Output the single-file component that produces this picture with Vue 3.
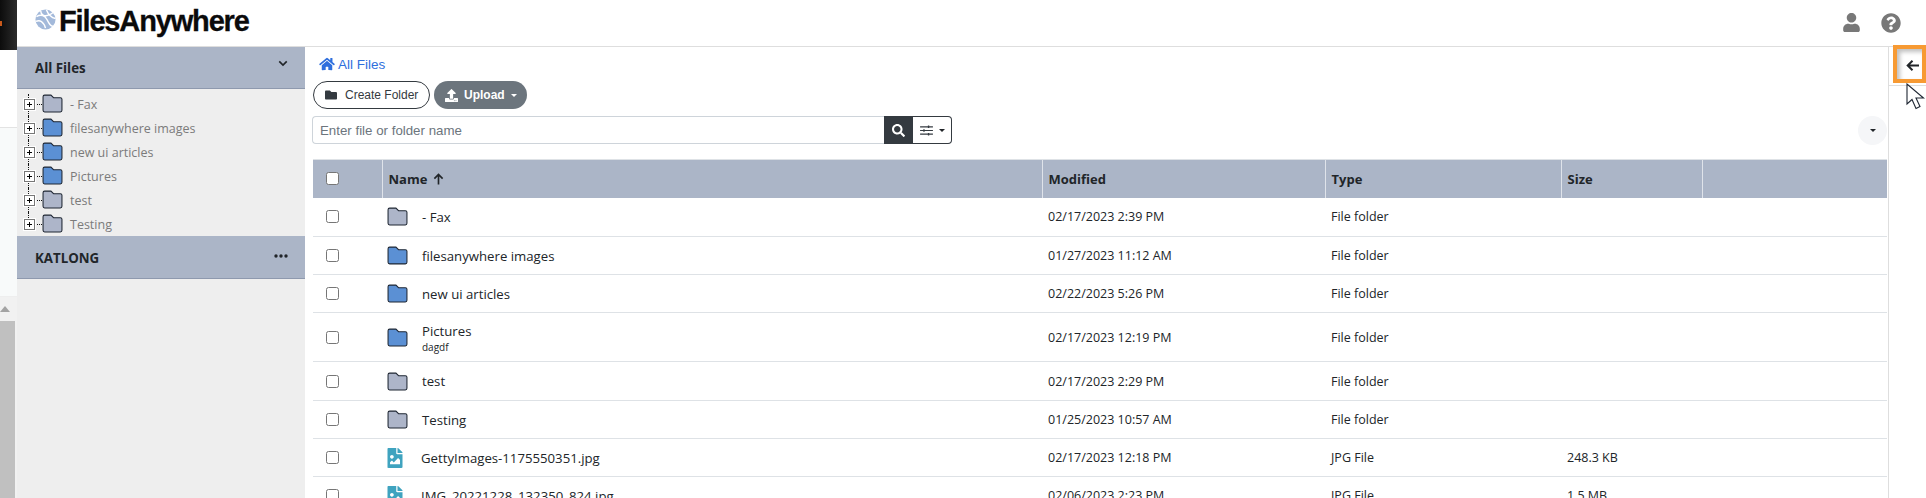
<template>
  <div class="page">
    <!-- slice of the window behind the file manager -->
    <div class="strip">
      <div class="strip-top"><span class="strip-mark"></span></div>
      <div class="strip-mid"></div>
      <div class="strip-low"></div>
      <div class="strip-arrow"><span></span></div>
      <div class="strip-thumb"></div>
    </div>

    <div class="shell">
      <header class="topbar">
        <div class="logo">
          <svg class="logo-globe" viewBox="0 0 22 22" aria-hidden="true">
            <circle cx="11" cy="11" r="10.500" fill="#a3b9da" />
            <path d="M1.500 8c5-3 9-1 11 3s4 8 7 7M1 13c4-2 8 0 10 7M6 2c0 4 4 6 8 4.500s5-3 5-3M12 1c2 5 5 8 9.500 9" fill="none" stroke="#fff" stroke-width="1.500" />
          </svg>
          <span class="logo-text">FilesAnywhere</span>
        </div>
        <div class="top-icons">
          <svg class="icon-user" viewBox="0 0 448 512" aria-hidden="true"><path :d="icons.user" /></svg>
          <svg class="icon-help" viewBox="0 0 512 512" aria-hidden="true"><path :d="icons.help" /></svg>
        </div>
      </header>

      <div class="body">
        <aside class="side">
          <div class="side-head">
            <span>All Files</span>
            <svg class="chev" viewBox="0 0 12 8" aria-hidden="true"><path d="M1.500 1.500 6 6l4.500-4.500" fill="none" stroke="#212529" stroke-width="2" /></svg>
          </div>
          <ul class="tree">
            <li v-for="(item, i) in tree" :key="item.name" class="tree-row">
              <span class="tree-v" :class="{ first: i === 0, last: i === tree.length - 1 }"></span>
              <span class="tree-box"></span>
              <span class="tree-h"></span>
              <svg class="tree-folder" viewBox="0 0 20 18" aria-hidden="true">
                <path d="M1 2.500a1.500 1.500 0 0 1 1.500-1.500h6l2.500 2.500H17.500a1.500 1.500 0 0 1 1.500 1.500V15.500A1.500 1.500 0 0 1 17.500 17H2.500A1.500 1.500 0 0 1 1 15.500z" :fill="item.blue ? '#5b90d4' : '#adb5c9'" stroke="#1f2733" stroke-width="1" />
              </svg>
              <span class="tree-name">{{ item.name }}</span>
            </li>
          </ul>
          <div class="side-head side-head-second">
            <span>KATLONG</span>
            <svg class="dots" viewBox="0 0 14 4" aria-hidden="true">
              <circle cx="2" cy="2" r="1.700" /><circle cx="7" cy="2" r="1.700" /><circle cx="12" cy="2" r="1.700" />
            </svg>
          </div>
        </aside>

        <main class="main">
          <div class="crumb">
            <svg class="icon-home" viewBox="0 0 576 512" aria-hidden="true"><path :d="icons.home" /></svg>
            <span>All Files</span>
          </div>

          <div class="actions">
            <button class="btn-create">
              <svg viewBox="0 0 512 512" aria-hidden="true"><path :d="icons.folder" /></svg>
              Create Folder
            </button>
            <button class="btn-upload">
              <svg viewBox="0 0 512 512" aria-hidden="true"><path :d="icons.upload" /></svg>
              Upload
              <span class="caret caret-light"></span>
            </button>
          </div>

          <div class="search-row">
            <div class="search">
              <input class="search-input" type="text" placeholder="Enter file or folder name" />
              <button class="search-go">
                <svg viewBox="0 0 512 512" aria-hidden="true"><path :d="icons.search" /></svg>
              </button>
              <button class="search-filter">
                <svg viewBox="0 0 14 12" aria-hidden="true">
                  <path d="M0 2h14M0 6h14M0 10h14" stroke="#343a40" stroke-width="1.200" fill="none" />
                  <path d="M8.500 .6h1.500v2.800H8.500zM3.500 4.600h1.500v2.800H3.500zM8.500 8.600h1.500v2.800H8.500z" fill="#343a40" />
                </svg>
                <span class="caret"></span>
              </button>
            </div>
            <span class="more"><span class="caret"></span></span>
          </div>

          <table class="files">
            <colgroup>
              <col class="c-check" /><col class="c-name" /><col class="c-mod" /><col class="c-type" /><col class="c-size" /><col />
            </colgroup>
            <thead>
              <tr>
                <th><span class="check"></span></th>
                <th>
                  Name
                  <svg class="sort" viewBox="0 0 12 13" aria-hidden="true"><path d="M6 12.500V1.500M1.500 6 6 1.500 10.500 6" fill="none" stroke="#212529" stroke-width="1.800" /></svg>
                </th>
                <th>Modified</th>
                <th>Type</th>
                <th>Size</th>
                <th></th>
              </tr>
            </thead>
            <tbody>
              <tr v-for="row in rows" :key="row.name" :style="{ height: row.h + 'px' }">
                <td><span class="check"></span></td>
                <td>
                  <div class="name-cell">
                    <svg v-if="row.kind !== 'image'" class="row-folder" viewBox="0 0 20 18" aria-hidden="true">
                      <path d="M1 2.500a1.500 1.500 0 0 1 1.500-1.500h6l2.500 2.500H17.500a1.500 1.500 0 0 1 1.500 1.500V15.500A1.500 1.500 0 0 1 17.500 17H2.500A1.500 1.500 0 0 1 1 15.500z" :fill="row.kind === 'blue' ? '#5b90d4' : '#adb5c9'" stroke="#1f2733" stroke-width="1" />
                    </svg>
                    <svg v-else class="row-image" viewBox="0 0 384 512" aria-hidden="true"><path :d="icons.image" /></svg>
                    <div class="name-text">
                      <div>{{ row.name }}</div>
                      <div v-if="row.note" class="note">{{ row.note }}</div>
                    </div>
                  </div>
                </td>
                <td>{{ row.modified }}</td>
                <td>{{ row.type }}</td>
                <td>{{ row.size }}</td>
                <td></td>
              </tr>
            </tbody>
          </table>
        </main>

        <div class="rail">
          <div class="rail-top">
            <div class="rail-mark">
              <svg viewBox="0 0 14 12" aria-hidden="true"><path d="M13 6H2M6.500 1.200 1.700 6l4.800 4.800" fill="none" stroke="#212529" stroke-width="2" /></svg>
            </div>
            <svg class="pointer" viewBox="0 0 20 28" aria-hidden="true">
              <path d="M1 1v20l5-4.500 4 9 4-2-4-8.500h7.500z" fill="#fff" stroke="#1f2733" stroke-width="1.100" />
            </svg>
          </div>
        </div>
      </div>
    </div>
  </div>
</template>

<script setup>
const icons = {
  user: 'M224 256c70.700 0 128-57.300 128-128S294.700 0 224 0 96 57.300 96 128s57.300 128 128 128zm89.600 32h-16.700c-22.200 10.200-46.900 16-72.900 16s-50.600-5.800-72.900-16h-16.700C60.200 288 0 348.200 0 422.400V464c0 26.500 21.500 48 48 48h352c26.500 0 48-21.500 48-48v-41.600c0-74.200-60.200-134.400-134.400-134.400z',
  help: 'M504 256c0 136.997-111.043 248-248 248S8 392.997 8 256C8 119.083 119.043 8 256 8s248 111.083 248 248zM262.655 90c-54.497 0-89.255 22.957-116.549 63.758-3.536 5.286-2.353 12.415 2.715 16.258l34.699 26.310c5.205 3.947 12.621 3.008 16.665-2.122 17.864-22.658 30.113-35.797 57.303-35.797 20.429 0 45.698 13.148 45.698 32.958 0 14.976-12.363 22.667-32.534 33.976C247.128 238.528 216 254.941 216 296v4c0 6.627 5.373 12 12 12h56c6.627 0 12-5.373 12-12v-1.333c0-28.462 83.186-29.647 83.186-106.667 0-58.002-60.165-102-116.531-102zM256 338c-25.365 0-46 20.635-46 46 0 25.364 20.635 46 46 46s46-20.636 46-46c0-25.365-20.635-46-46-46z',
  home: 'M280.370 148.260L96 300.110V464a16 16 0 0 0 16 16l112.060-.29a16 16 0 0 0 15.920-16V368a16 16 0 0 1 16-16h64a16 16 0 0 1 16 16v95.640a16 16 0 0 0 16 16.050L464 480a16 16 0 0 0 16-16V300L295.670 148.260a12.190 12.190 0 0 0-15.300 0zM571.600 251.470L488 182.560V44.050a12 12 0 0 0-12-12h-56a12 12 0 0 0-12 12v72.610L318.470 43a48 48 0 0 0-61 0L4.340 251.470a12 12 0 0 0-1.600 16.900l25.500 31A12 12 0 0 0 45.150 301l235.220-193.740a12.190 12.190 0 0 1 15.300 0L530.900 301a12 12 0 0 0 16.900-1.600l25.500-31a12 12 0 0 0-1.700-16.930z',
  folder: 'M464 128H272l-64-64H48C21.490 64 0 85.490 0 112v288c0 26.510 21.490 48 48 48h416c26.510 0 48-21.490 48-48V176c0-26.510-21.490-48-48-48z',
  upload: 'M296 384h-80c-13.300 0-24-10.700-24-24V192h-87.700c-17.800 0-26.700-21.500-14.100-34.100L242.300 5.700c7.500-7.500 19.800-7.500 27.300 0l152.200 152.200c12.600 12.600 3.700 34.100-14.100 34.100H320v168c0 13.300-10.700 24-24 24zm216-8v112c0 13.300-10.700 24-24 24H24c-13.300 0-24-10.700-24-24V376c0-13.300 10.700-24 24-24h136v8c0 30.900 25.100 56 56 56h80c30.900 0 56-25.100 56-56v-8h136c13.300 0 24 10.700 24 24zm-124 88c0-11-9-20-20-20s-20 9-20 20 9 20 20 20 20-9 20-20zm64 0c0-11-9-20-20-20s-20 9-20 20 9 20 20 20 20-9 20-20z',
  search: 'M505 442.700L405.300 343c-4.500-4.500-10.600-7-17-7H372c27.600-35.300 44-79.700 44-128C416 93.100 322.900 0 208 0S0 93.100 0 208s93.100 208 208 208c48.300 0 92.700-16.400 128-44v16.300c0 6.400 2.500 12.500 7 17l99.700 99.700c9.400 9.400 24.600 9.400 33.900 0l28.300-28.300c9.400-9.400 9.400-24.600.1-34zM208 336c-70.700 0-128-57.200-128-128 0-70.700 57.200-128 128-128 70.700 0 128 57.200 128 128 0 70.700-57.200 128-128 128z',
  image: 'M384 121.941V128H256V0h6.059a24 24 0 0 1 16.970 7.029l97.941 97.941a24.002 24.002 0 0 1 7.030 16.971zM248 160c-13.200 0-24-10.800-24-24V0H24C10.745 0 0 10.745 0 24v464c0 13.255 10.745 24 24 24h336c13.255 0 24-10.745 24-24V160H248zm-135.455 16c26.510 0 48 21.490 48 48s-21.490 48-48 48-48-21.490-48-48 21.491-48 48-48zm208 240h-256l.485-48.485L104.545 328c4.686-4.686 11.799-4.201 16.485.485L160.545 368 264.060 264.485c4.686-4.686 12.284-4.686 16.971 0L320.545 304v112z'
}

const tree = [
  { name: '- Fax', blue: false },
  { name: 'filesanywhere images', blue: true },
  { name: 'new ui articles', blue: true },
  { name: 'Pictures', blue: true },
  { name: 'test', blue: false },
  { name: 'Testing', blue: false }
]

const rows = [
  { name: '- Fax', kind: 'grey', modified: '02/17/2023 2:39 PM', type: 'File folder', size: '', h: 39 },
  { name: 'filesanywhere images', kind: 'blue', modified: '01/27/2023 11:12 AM', type: 'File folder', size: '', h: 38 },
  { name: 'new ui articles', kind: 'blue', modified: '02/22/2023 5:26 PM', type: 'File folder', size: '', h: 38 },
  { name: 'Pictures', note: 'dagdf', kind: 'blue', modified: '02/17/2023 12:19 PM', type: 'File folder', size: '', h: 49 },
  { name: 'test', kind: 'grey', modified: '02/17/2023 2:29 PM', type: 'File folder', size: '', h: 39 },
  { name: 'Testing', kind: 'grey', modified: '01/25/2023 10:57 AM', type: 'File folder', size: '', h: 38 },
  { name: 'GettyImages-1175550351.jpg', kind: 'image', modified: '02/17/2023 12:18 PM', type: 'JPG File', size: '248.3 KB', h: 38 },
  { name: 'IMG_20221228_132350_824.jpg', kind: 'image', modified: '02/06/2023 2:23 PM', type: 'JPG File', size: '1.5 MB', h: 38 }
]
</script>

<style>
html, body {
  margin: 0;
  background: #fff;
  overflow: hidden;
}
</style>

<style scoped>
.page {
  display: flex;
  height: 498px;
  overflow: hidden;
  font-family: "Open Sans", sans-serif;
  color: #212529;
}

.strip {
  width: 17px;
  flex: none;
  display: flex;
  flex-direction: column;
  background: #f1f1f1;
}
.strip-top {
  height: 50px;
  background: linear-gradient(90deg, #0c0c0c, #2b2b2b);
  display: flex;
  align-items: center;
}
.strip-mark {
  width: 2px;
  height: 5px;
  margin-bottom: 4px;
  background: #c9591b;
}
.strip-mid {
  height: 77px;
  background: #fff;
  border-bottom: 1px solid #e3e3e3;
}
.strip-low {
  height: 168px;
  background: #f8fafa;
  border-bottom: 1px solid #eee;
}
.strip-arrow {
  height: 24px;
  display: flex;
  align-items: center;
}
.strip-arrow span {
  width: 0;
  height: 0;
  border-left: 5px solid transparent;
  border-right: 5px solid transparent;
  border-bottom: 6px solid #a3a3a3;
}
.strip-thumb {
  flex: 1;
  width: 15px;
  background: #c0c0c0;
}

.shell {
  flex: 1;
  min-width: 0;
  display: flex;
  flex-direction: column;
}

.topbar {
  height: 46px;
  flex: none;
  display: flex;
  align-items: center;
  justify-content: space-between;
  padding: 0 25px 0 18px;
  border-bottom: 1px solid #dedede;
  background: #fff;
}
.logo {
  display: flex;
  align-items: center;
  gap: 3px;
  margin-top: -5px;
}
.logo-globe {
  width: 21px;
  height: 21px;
  margin-top: -2px;
}
.logo-text {
  font-family: "Liberation Sans", Arial, sans-serif;
  font-weight: 700;
  font-size: 29px;
  letter-spacing: -1.150px;
  line-height: 32px;
  color: #0b0b0b;
  -webkit-text-stroke: .3px #0b0b0b;
}
.top-icons {
  display: flex;
  align-items: center;
  gap: 21px;
  margin-top: -1px;
  fill: #787878;
}
.icon-user {
  width: 17px;
  height: 19px;
}
.icon-help {
  width: 20px;
  height: 20px;
}

.body {
  flex: 1;
  min-height: 0;
  display: flex;
}

.side {
  width: 288px;
  flex: none;
  background: #eee;
}
.side-head {
  height: 42px;
  padding: 1px 17px 0 18px;
  box-sizing: border-box;
  display: flex;
  align-items: center;
  justify-content: space-between;
  background: #abb5c7;
  border-bottom: 1px solid #8e99ae;
  font-size: 13.300px;
  font-weight: 700;
  color: #212529;
}
.side-head-second {
  height: 43px;
}
.chev {
  width: 10px;
  height: 7px;
  margin-top: -9px;
}
.dots {
  width: 14px;
  height: 4px;
  margin-top: -4px;
  fill: #212529;
}

.tree {
  list-style: none;
  margin: 0;
  padding: 3px 0 0;
  height: 144px;
}
.tree-row {
  position: relative;
  height: 24px;
  display: flex;
  align-items: center;
  padding-left: 7px;
}
.tree-v {
  position: absolute;
  left: 11px;
  top: 0;
  bottom: 0;
  border-left: 1px dotted #111;
}
.tree-v.first {
  top: 2px;
}
.tree-v.last {
  bottom: 12px;
}
.tree-box {
  position: relative;
  width: 9px;
  height: 9px;
  flex: none;
  border: 1px solid #777;
  outline: 1px solid #fff;
  background:
    linear-gradient(#000, #000) center / 5px 1px no-repeat,
    linear-gradient(#000, #000) center / 1px 5px no-repeat,
    #fff;
}
.tree-h {
  width: 7px;
  flex: none;
  border-top: 1px dotted #111;
}
.tree-folder {
  width: 21px;
  height: 19px;
  flex: none;
  margin-top: -2px;
}
.tree-name {
  margin-left: 7px;
  font-size: 12.500px;
  color: #7b7b7b;
  white-space: nowrap;
}

.main {
  flex: 1;
  min-width: 0;
  padding: 0 1px 0 7px;
  background: #fff;
}

.crumb {
  height: 34px;
  display: flex;
  align-items: center;
  gap: 3px;
  padding: 0 0 0 7px;
  box-sizing: border-box;
  font-family: "Liberation Sans", Arial, sans-serif;
  font-size: 13.500px;
  color: #2f6fdd;
}
.icon-home {
  width: 16px;
  height: 14px;
  fill: #2f6fdd;
}

.actions {
  display: flex;
  gap: 4px;
  height: 28px;
  padding-left: 1px;
}
.actions button {
  height: 28px;
  box-sizing: border-box;
  border-radius: 14px;
  display: flex;
  align-items: center;
  font-family: "Liberation Sans", Arial, sans-serif;
  font-size: 12px;
  white-space: nowrap;
  cursor: pointer;
}
.btn-create {
  width: 117px;
  padding: 0 0 0 11px;
  gap: 8px;
  background: #fff;
  border: 1px solid #343a40;
  color: #343a40;
}
.btn-create svg {
  width: 12px;
  height: 12px;
  fill: #343a40;
}
.btn-upload {
  width: 93px;
  padding: 0 0 0 11px;
  gap: 6px;
  background: #6c757d;
  border: 0;
  color: #fff;
  font-weight: 700;
}
.btn-upload svg {
  width: 13px;
  height: 13px;
  fill: #fff;
}

.caret {
  width: 0;
  height: 0;
  display: inline-block;
  border-left: 3.500px solid transparent;
  border-right: 3.500px solid transparent;
  border-top: 3.500px solid #212529;
}
.caret-light {
  border-top-color: #fff;
}

.search-row {
  display: flex;
  align-items: center;
  justify-content: space-between;
  margin-top: 7px;
  height: 28px;
}
.search {
  display: flex;
  height: 28px;
}
.search-input {
  width: 572px;
  height: 28px;
  box-sizing: border-box;
  padding: 0 7px;
  border: 1px solid #ced4da;
  border-right: 0;
  border-radius: 4px 0 0 4px;
  outline: none;
  font-family: "Liberation Sans", Arial, sans-serif;
  font-size: 13.300px;
}
.search-input::placeholder {
  color: #6c757d;
  opacity: 1;
}
.search-go {
  width: 29px;
  height: 28px;
  padding: 0;
  border: 0;
  background: #343a40;
  display: flex;
  align-items: center;
  justify-content: center;
}
.search-go svg {
  width: 13px;
  height: 13px;
  fill: #fff;
}
.search-filter {
  width: 39px;
  height: 28px;
  padding: 0;
  box-sizing: border-box;
  background: #fff;
  border: 1px solid #343a40;
  border-left: 0;
  border-radius: 0 4px 4px 0;
  display: flex;
  align-items: center;
  justify-content: center;
  gap: 6px;
}
.search-filter svg {
  width: 13px;
  height: 11px;
}
.more {
  width: 29px;
  height: 29px;
  border-radius: 50%;
  background: #f5f6f8;
  display: flex;
  align-items: center;
  justify-content: center;
}

.files {
  margin: 15px 0 0 1px;
  width: 1574px;
  table-layout: fixed;
  border-collapse: collapse;
  font-size: 12.500px;
}
.c-check { width: 69px; }
.c-name { width: 660px; }
.c-mod { width: 283px; }
.c-type { width: 236px; }
.c-size { width: 141px; }
.files th {
  height: 38px;
  box-sizing: border-box;
  padding: 0 6px;
  background: #abb5c7;
  border-left: 1px solid #dfe3ea;
  border-top: 1px solid #dee2e6;
  text-align: left;
  font-size: 13px;
  font-weight: 700;
  color: #212529;
  white-space: nowrap;
}
.files th:first-child {
  border-left: 0;
}
.files td {
  padding: 0 6px;
  border-bottom: 1px solid #dee2e6;
  box-sizing: border-box;
  white-space: nowrap;
}
.files td:first-child,
.files th:first-child {
  padding: 0 0 0 13px;
}
.check {
  display: block;
  width: 13px;
  height: 13px;
  box-sizing: border-box;
  border: 1px solid #767676;
  border-radius: 2.500px;
  background: #fff;
}
.sort {
  width: 11px;
  height: 12px;
  margin-left: 2px;
  vertical-align: -1px;
}
.name-cell {
  display: flex;
  align-items: center;
}
.row-folder {
  width: 21px;
  height: 19px;
  flex: none;
  margin-left: -1px;
}
.row-image {
  width: 16px;
  height: 20px;
  flex: none;
  margin-left: -1px;
  margin-right: 4px;
  fill: #3fa3bf;
}
.name-text {
  margin-left: 14px;
  font-size: 13.200px;
}
.note {
  font-size: 10px;
  line-height: 11px;
  margin-top: 2px;
}

.rail {
  width: 38px;
  flex: none;
  box-sizing: border-box;
  border-left: 1px solid #dedede;
}
.rail-top {
  position: relative;
  height: 39px;
  box-sizing: border-box;
  border-bottom: 1px solid #dedede;
}
.rail-mark {
  position: absolute;
  top: -2px;
  right: 0;
  width: 33px;
  height: 38px;
  box-sizing: border-box;
  padding: 3px 0 0 6px;
  border: 4.500px solid #f79a33;
  box-shadow: inset 3px 3px 4px rgba(0, 0, 0, .25);
  display: flex;
  align-items: center;
  justify-content: center;
  background: #fff;
}
.rail-mark svg {
  width: 14px;
  height: 13px;
}
.pointer {
  position: absolute;
  left: 17px;
  top: 36px;
  width: 20px;
  height: 28px;
}
</style>
